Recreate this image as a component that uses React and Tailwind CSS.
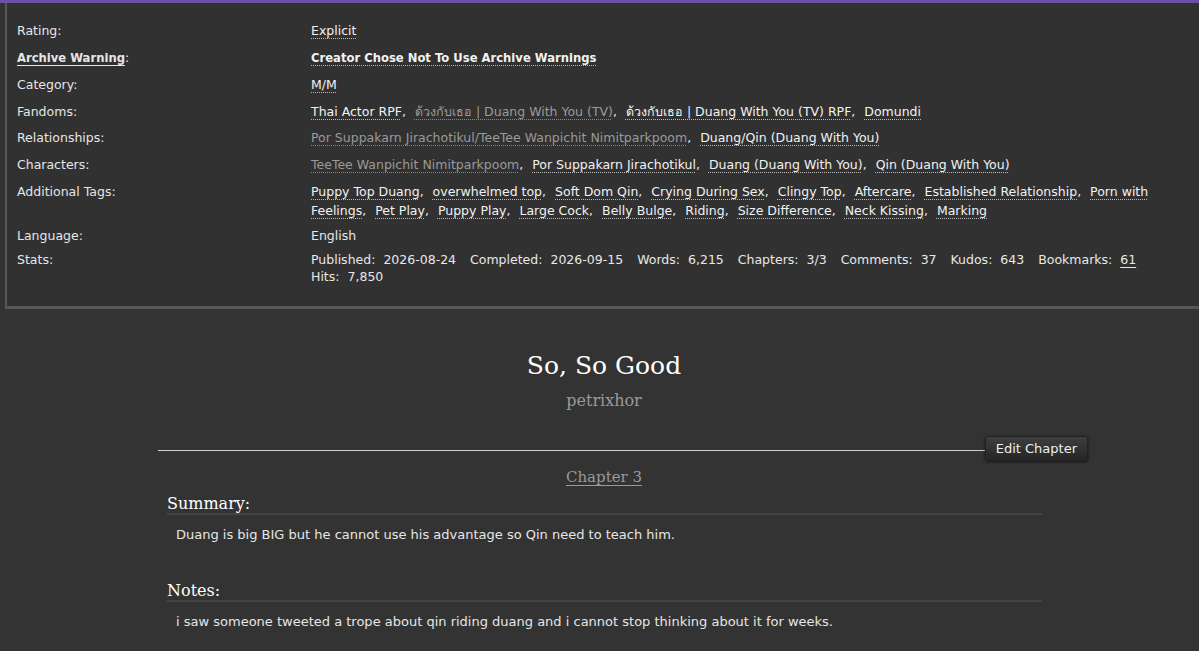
import React from 'react';

const sans = { fontFamily: '"DejaVu Sans", "Noto Sans", sans-serif' };
const serif = { fontFamily: '"DejaVu Serif", "Liberation Serif", serif' };

// a comma-separated list of dotted-underline links
function TagList({ tags }) {
  return (
    <ul className="inline">
      {tags.map((t, i) => (
        <li key={i} className="inline">
          <a
            className={`underline decoration-dotted decoration-1 underline-offset-[3px] ${t.dim ? 'text-[#9a9a9a] decoration-[#888]' : 'text-[#f2f2f2] decoration-[#bbb]'}`}
          >
            {t.name}
          </a>
          {i < tags.length - 1 && <span className="mr-[9px]">,</span>}
        </li>
      ))}
    </ul>
  );
}

const t = (name, dim = false) => ({ name, dim });

function MetaRow({ label, boldLabel, children, className = 'mb-[7.6px]' }) {
  return (
    <div className={`grid grid-cols-[294px_1fr] ${className}`}>
      <dt className="text-[#e6e6e6]">
        {boldLabel ? (
          <>
            <span className="text-[11.6px] font-bold underline decoration-1 underline-offset-[3px]">{label}</span>:
          </>
        ) : (
          label + ':'
        )}
      </dt>
      <dd className="pr-[46px]">{children}</dd>
    </div>
  );
}

function Stat({ label, value, link }) {
  return (
    <span className="mr-[14px] whitespace-nowrap">
      {label}:
      <span className="ml-[8px]">
        {link ? <a className="underline decoration-1 underline-offset-[3px]">{value}</a> : value}
      </span>
    </span>
  );
}

export default function App() {
  return (
    <div className="min-h-[651px] bg-[#333333] text-[#e8e8e8] text-[12.5px] overflow-hidden" style={sans}>
      {/* top accent */}
      <div className="h-[3px] bg-[#6e4fa6]" />

      {/* work meta */}
      <dl className="ml-[5px] border-l-2 border-b-[3px] border-[#575757] bg-[#313131] pl-[10px] pt-[18px] pb-[21px] leading-[19px]">
        <MetaRow label="Rating">
          <TagList tags={[t('Explicit')]} />
        </MetaRow>
        <MetaRow label="Archive Warning" boldLabel>
          <span className="text-[11.6px] font-bold">
            <TagList tags={[t('Creator Chose Not To Use Archive Warnings')]} />
          </span>
        </MetaRow>
        <MetaRow label="Category">
          <TagList tags={[t('M/M')]} />
        </MetaRow>
        <MetaRow label="Fandoms">
          <TagList
            tags={[
              t('Thai Actor RPF'),
              t('ด้วงกับเธอ | Duang With You (TV)', true),
              t('ด้วงกับเธอ | Duang With You (TV) RPF'),
              t('Domundi'),
            ]}
          />
        </MetaRow>
        <MetaRow label="Relationships">
          <TagList
            tags={[
              t('Por Suppakarn Jirachotikul/TeeTee Wanpichit Nimitparkpoom', true),
              t('Duang/Qin (Duang With You)'),
            ]}
          />
        </MetaRow>
        <MetaRow label="Characters" className="mb-[8px]">
          <TagList
            tags={[
              t('TeeTee Wanpichit Nimitparkpoom', true),
              t('Por Suppakarn Jirachotikul'),
              t('Duang (Duang With You)'),
              t('Qin (Duang With You)'),
            ]}
          />
        </MetaRow>
        <MetaRow label="Additional Tags" className="mb-[6px]">
          <TagList
            tags={[
              t('Puppy Top Duang'),
              t('overwhelmed top'),
              t('Soft Dom Qin'),
              t('Crying During Sex'),
              t('Clingy Top'),
              t('Aftercare'),
              t('Established Relationship'),
              t('Porn with Feelings'),
              t('Pet Play'),
              t('Puppy Play'),
              t('Large Cock'),
              t('Belly Bulge'),
              t('Riding'),
              t('Size Difference'),
              t('Neck Kissing'),
              t('Marking'),
            ]}
          />
        </MetaRow>
        <MetaRow label="Language" className="mb-[6px]">
          English
        </MetaRow>
        <MetaRow label="Stats" className="leading-[17px]">
          <div>
            <Stat label="Published" value="2026-08-24" />
            <Stat label="Completed" value="2026-09-15" />
            <Stat label="Words" value="6,215" />
            <Stat label="Chapters" value="3/3" />
            <Stat label="Comments" value="37" />
            <Stat label="Kudos" value="643" />
            <Stat label="Bookmarks" value="61" link />
            <br />
            <Stat label="Hits" value="7,850" />
          </div>
        </MetaRow>
      </dl>

      {/* chapter */}
      <div className="ml-[158px] w-[892px]">
        <div className="pt-[40px] text-center" style={serif}>
          <h2 className="text-[25px] leading-[34px] text-white">So, So Good</h2>
          <h3 className="mt-[6px] text-[16px] leading-[24px] text-[#9a9a9a]">petrixhor</h3>
        </div>

        <div className="mt-[23px] flex items-center">
          <div className="h-px flex-1 bg-[#cfcfcf]" />
          <button className="-mr-[38px] mb-[4px] h-[25px] rounded-[3px] border border-[#222] bg-gradient-to-b from-[#3e3e3e] to-[#262626] px-[10px] text-[13px] text-[#eee] shadow-[0_1px_3px_rgba(0,0,0,0.6)]">
            Edit Chapter
          </button>
        </div>

        <div className="mt-[-1px] text-center" style={serif}>
          <a className="text-[15px] leading-[26px] text-[#9a9a9a] underline decoration-1 underline-offset-[3px]">Chapter 3</a>
        </div>

        <div className="pl-[9px] pr-[8px]">
          <h3 className="mt-[5px] border-b-2 border-[#444] text-[16px] leading-[18px] text-white" style={serif}>
            Summary:
          </h3>
          <p className="ml-[9px] mt-[10px] text-[13px] leading-[19px] text-[#e6e6e6]">
            Duang is big BIG but he cannot use his advantage so Qin need to teach him.
          </p>

          <h3 className="mt-[38px] border-b-2 border-[#444] text-[16px] leading-[18px] text-white" style={serif}>
            Notes:
          </h3>
          <p className="ml-[9px] mt-[10px] text-[13px] leading-[19px] text-[#e6e6e6]">
            i saw someone tweeted a trope about qin riding duang and i cannot stop thinking about it for weeks.
          </p>
        </div>
      </div>
    </div>
  );
}
